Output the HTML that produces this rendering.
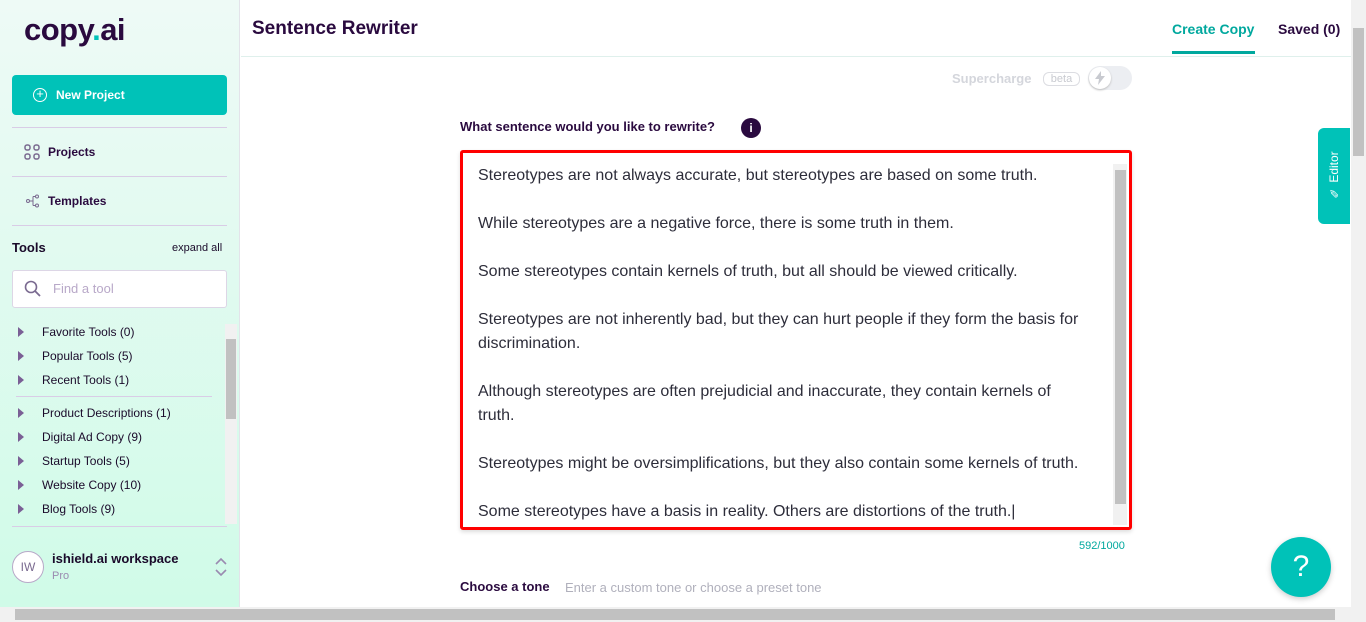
<!DOCTYPE html>
<html><head><style>
*{box-sizing:border-box;margin:0;padding:0}
body{width:1366px;height:622px;overflow:hidden;font-family:"Liberation Sans",sans-serif;background:#fff;position:relative;color:#2a0a3f}
.sb{position:absolute;left:0;top:0;width:240px;height:607px;background:linear-gradient(#eefaf6,#d0fbe8);border-right:1px solid #e3e3ea}
.abs{position:absolute}
.hr{position:absolute;left:12px;width:215px;height:1px;background:#d9cce6}
.tool{position:absolute;left:42px;font-size:12px;color:#1a0a2a}
.tri{position:absolute;left:18px;width:0;height:0;border-left:6px solid #7a5f95;border-top:5px solid transparent;border-bottom:5px solid transparent}
.p{position:absolute;left:478px;font-size:16px;color:#2d2d3a;line-height:24px;width:640px;white-space:nowrap}
</style></head><body>
<div class="sb">
 <div class="abs" style="left:24px;top:12px;font-size:31px;font-weight:bold;color:#2a0a3f;letter-spacing:-0.5px">copy<span style="color:#00c2b8">.</span>ai</div>
 <div class="abs" style="left:12px;top:75px;width:215px;height:40px;background:#00c2b8;border-radius:4px;color:#fff;font-size:12px;font-weight:bold;line-height:40px;padding-left:44px">New Project
  <div class="abs" style="left:21px;top:13px;width:14px;height:14px;border:1.5px solid #fff;border-radius:50%;font-size:13px;line-height:10px;text-align:center;font-weight:normal">+</div></div>
 <div class="hr" style="top:127px"></div>
 <svg class="abs" style="left:24px;top:144px" width="16" height="16"><g fill="none" stroke="#7a6a90" stroke-width="1.5"><rect x="1" y="1" width="5" height="5" rx="2"/><rect x="10" y="1" width="5" height="5" rx="2"/><rect x="1" y="10" width="5" height="5" rx="2"/><rect x="10" y="10" width="5" height="5" rx="2"/></g></svg>
 <div class="abs" style="left:48px;top:145px;font-size:12px;font-weight:bold">Projects</div>
 <div class="hr" style="top:176px"></div>
 <svg class="abs" style="left:26px;top:194px" width="14" height="14"><g fill="none" stroke="#7a6a90" stroke-width="1"><circle cx="2" cy="7" r="1.5"/><circle cx="11" cy="2.5" r="1.5"/><circle cx="11" cy="11.5" r="1.5"/><path d="M3.5 7H7M7 2.5V11.5M7 2.5H9.5M7 11.5H9.5"/></g></svg>
 <div class="abs" style="left:48px;top:194px;font-size:12px;font-weight:bold">Templates</div>
 <div class="hr" style="top:225px"></div>
 <div class="abs" style="left:12px;top:240px;font-size:13px;font-weight:bold;color:#1a0a2a">Tools</div>
 <div class="abs" style="left:172px;top:242px;font-size:11px;color:#1a0a2a">expand all</div>
 <div class="abs" style="left:12px;top:270px;width:215px;height:38px;background:#fff;border:1px solid #ddd6e6;border-radius:3px"></div>
 <svg class="abs" style="left:24px;top:280px" width="18" height="18"><circle cx="7" cy="7" r="5.5" fill="none" stroke="#7a6a90" stroke-width="1.6"/><path d="M11 11L16 16" stroke="#7a6a90" stroke-width="1.8"/></svg>
 <div class="abs" style="left:53px;top:281px;font-size:13px;color:#b8a8c8">Find a tool</div>
 <div class="tri" style="top:327px"></div><div class="tool" style="top:325px">Favorite Tools (0)</div>
 <div class="tri" style="top:351px"></div><div class="tool" style="top:349px">Popular Tools (5)</div>
 <div class="tri" style="top:375px"></div><div class="tool" style="top:373px">Recent Tools (1)</div>
 <div class="abs" style="left:16px;top:396px;width:196px;height:1px;background:#d9cce6"></div>
 <div class="tri" style="top:408px"></div><div class="tool" style="top:406px">Product Descriptions (1)</div>
 <div class="tri" style="top:432px"></div><div class="tool" style="top:430px">Digital Ad Copy (9)</div>
 <div class="tri" style="top:456px"></div><div class="tool" style="top:454px">Startup Tools (5)</div>
 <div class="tri" style="top:480px"></div><div class="tool" style="top:478px">Website Copy (10)</div>
 <div class="tri" style="top:504px"></div><div class="tool" style="top:502px">Blog Tools (9)</div>
 <div class="abs" style="left:225px;top:324px;width:12px;height:200px;background:#f1f1f1"></div>
 <div class="abs" style="left:226px;top:339px;width:10px;height:80px;background:#c1c1c1"></div>
 <div class="hr" style="top:526px"></div>
 <div class="abs" style="left:12px;top:551px;width:32px;height:32px;border:1px solid #b8a8c8;border-radius:50%;background:#fff;font-size:12px;color:#7a6a90;text-align:center;line-height:30px">IW</div>
 <div class="abs" style="left:52px;top:551px;font-size:13px;font-weight:bold;color:#1a0a2a">ishield.ai workspace</div>
 <div class="abs" style="left:52px;top:570px;font-size:11px;color:#9a8ab0">Pro</div>
 <svg class="abs" style="left:214px;top:557px" width="14" height="20"><path d="M2 7L7 2L12 7M2 13L7 18L12 13" fill="none" stroke="#9a8ab0" stroke-width="1.6"/></svg>
</div>
<div class="abs" style="left:241px;top:56px;width:1110px;height:1px;background:#dff0ec"></div>
<div class="abs" style="left:252px;top:18px;font-size:19px;font-weight:bold;color:#2a0a3f">Sentence Rewriter</div>
<div class="abs" style="left:1172px;top:21px;font-size:14px;font-weight:bold;color:#00a89e">Create Copy</div>
<div class="abs" style="left:1172px;top:51px;width:83px;height:3px;background:#00a89e"></div>
<div class="abs" style="left:1278px;top:21px;font-size:14px;font-weight:bold;color:#2a0a3f">Saved (0)</div>
<div class="abs" style="left:952px;top:71px;font-size:13px;font-weight:bold;color:#d4d6dc">Supercharge</div>
<div class="abs" style="left:1043px;top:72px;width:37px;height:14px;border:1px solid #dcdde2;border-radius:6px;font-size:11px;color:#c8cad0;text-align:center;line-height:12px">beta</div>
<div class="abs" style="left:1088px;top:66px;width:44px;height:24px;border-radius:12px;background:#eceef2"></div>
<div class="abs" style="left:1089px;top:67px;width:22px;height:22px;border-radius:50%;background:#fff;box-shadow:0 1px 2px #bbb"></div>
<svg class="abs" style="left:1094px;top:71px" width="12" height="14"><path d="M7 0L1 8H5L4 14L11 5H7Z" fill="#c8cad0"/></svg>
<div class="abs" style="left:460px;top:119px;font-size:13px;font-weight:bold;color:#2a0a3f">What sentence would you like to rewrite?</div>
<div class="abs" style="left:741px;top:118px;width:20px;height:20px;border-radius:50%;background:#2a0a3f;color:#fff;font-size:12px;font-weight:bold;text-align:center;line-height:20px">i</div>
<div class="abs" style="left:460px;top:150px;width:672px;height:380px;border:3px solid #f00;border-radius:3px;box-shadow:0 2px 4px #ddd"></div>
<div class="abs" style="left:1113px;top:164px;width:14px;height:361px;background:#f1f1f1"></div>
<div class="abs" style="left:1115px;top:170px;width:11px;height:334px;background:#c1c1c1"></div>
<div class="p" style="top:164px">Stereotypes are not always accurate, but stereotypes are based on some truth.</div>
<div class="p" style="top:212px">While stereotypes are a negative force, there is some truth in them.</div>
<div class="p" style="top:260px">Some stereotypes contain kernels of truth, but all should be viewed critically.</div>
<div class="p" style="top:308px">Stereotypes are not inherently bad, but they can hurt people if they form the basis for<br>discrimination.</div>
<div class="p" style="top:380px">Although stereotypes are often prejudicial and inaccurate, they contain kernels of<br>truth.</div>
<div class="p" style="top:452px">Stereotypes might be oversimplifications, but they also contain some kernels of truth.</div>
<div class="p" style="top:500px">Some stereotypes have a basis in reality. Others are distortions of the truth.|</div>
<div class="abs" style="left:1079px;top:540px;font-size:11px;color:#00a89e">592/1000</div>
<div class="abs" style="left:460px;top:579px;font-size:13px;font-weight:bold;color:#2a0a3f">Choose a tone</div>
<div class="abs" style="left:565px;top:580px;font-size:13px;color:#b0b0bc">Enter a custom tone or choose a preset tone</div>
<div class="abs" style="left:1271px;top:537px;width:60px;height:60px;border-radius:50%;background:#00c2b8;color:#fff;font-size:30px;text-align:center;line-height:60px;box-shadow:0 2px 6px #ccc">?</div>
<div class="abs" style="left:1318px;top:128px;width:32px;height:96px;background:#00c2b8;border-radius:6px 0 0 6px"></div>
<div class="abs" style="left:1318px;top:128px;width:32px;height:96px;color:#fff;font-size:12px;writing-mode:vertical-rl;transform:rotate(180deg);text-align:center;line-height:32px">✎ Editor</div>
<div class="abs" style="left:1351px;top:0;width:15px;height:607px;background:#f1f1f1"></div>
<div class="abs" style="left:1353px;top:28px;width:11px;height:128px;background:#c1c1c1"></div>
<div class="abs" style="left:0;top:607px;width:1366px;height:15px;background:#f1f1f1"></div>
<div class="abs" style="left:15px;top:609px;width:1320px;height:11px;background:#c1c1c1"></div>
</body></html>
